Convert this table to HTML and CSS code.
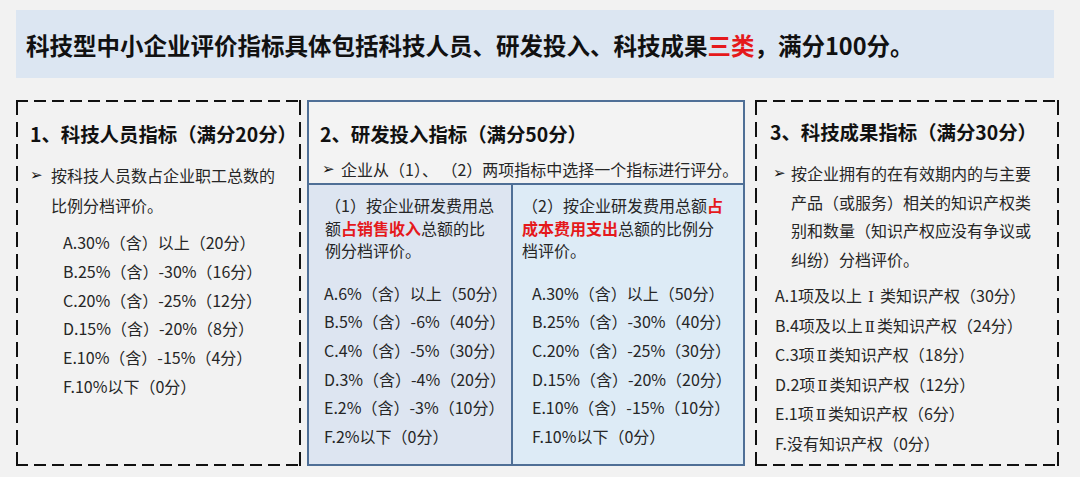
FILE: index.html
```html
<!DOCTYPE html>
<html lang="zh-CN">
<head>
<meta charset="utf-8">
<title>科技型中小企业评价指标</title>
<link rel="stylesheet" href="styles.css">
</head>
<body>
<div class="page">
  <div class="banner">科技型中小企业评价指标具体包括科技人员、研发投入、科技成果<span class="red">三类</span>，满分100分。</div>
  <div class="row">
    <section class="box dash box1">
      <h2 class="title">1、科技人员指标（满分20分）</h2>
      <div class="bullet"><span class="mark">➢</span><p>按科技人员数占企业职工总数的<br>比例分档评价。</p></div>
      <ul class="list list1">
        <li>A.30%（含）以上（20分）</li>
        <li>B.25%（含）-30%（16分）</li>
        <li>C.20%（含）-25%（12分）</li>
        <li>D.15%（含）-20%（8分）</li>
        <li>E.10%（含）-15%（4分）</li>
        <li>F.10%以下（0分）</li>
      </ul>
    </section>
    <section class="box box2">
      <div class="head">
        <h2 class="title">2、研发投入指标（满分50分）</h2>
        <div class="bullet sub"><span class="mark">➢</span><p>企业从（1）、 （2）两项指标中选择一个指标进行评分。</p></div>
      </div>
      <div class="cols">
        <div class="col left">
          <p class="desc">（1）按企业研发费用总<br>额<b class="red">占销售收入</b>总额的比<br>例分档评价。</p>
          <ul class="list list2">
            <li>A.6%（含）以上（50分）</li>
            <li>B.5%（含）-6%（40分）</li>
            <li>C.4%（含）-5%（30分）</li>
            <li>D.3%（含）-4%（20分）</li>
            <li>E.2%（含）-3%（10分）</li>
            <li>F.2%以下（0分）</li>
          </ul>
        </div>
        <div class="col right">
          <p class="desc">（2）按企业研发费用总额<b class="red">占</b><br><b class="red">成本费用支出</b>总额的比例分<br>档评价。</p>
          <ul class="list list2 listr">
            <li>A.30%（含）以上（50分）</li>
            <li>B.25%（含）-30%（40分）</li>
            <li>C.20%（含）-25%（30分）</li>
            <li>D.15%（含）-20%（20分）</li>
            <li>E.10%（含）-15%（10分）</li>
            <li>F.10%以下（0分）</li>
          </ul>
        </div>
      </div>
    </section>
    <section class="box dash box3">
      <h2 class="title">3、科技成果指标（满分30分）</h2>
      <div class="bullet b3"><span class="mark">➢</span><p>按企业拥有的在有效期内的与主要<br>产品（或服务）相关的知识产权类<br>别和数量（知识产权应没有争议或<br>纠纷）分档评价。</p></div>
      <ul class="list list3">
        <li>A.1项及以上<span class="rn rn1">Ⅰ</span>类知识产权（30分）</li>
        <li>B.4项及以上<span class="rn">Ⅱ</span>类知识产权（24分）</li>
        <li>C.3项<span class="rn">Ⅱ</span>类知识产权（18分）</li>
        <li>D.2项<span class="rn">Ⅱ</span>类知识产权（12分）</li>
        <li>E.1项<span class="rn">Ⅱ</span>类知识产权（6分）</li>
        <li>F.没有知识产权（0分）</li>
      </ul>
    </section>
  </div>
</div>
</body>
</html>
```
FILE: styles.css
```css
* { box-sizing: border-box; }
html, body { margin: 0; padding: 0; }
body {
  width: 1080px;
  height: 477px;
  overflow: hidden;
  background: #f2f2f2;
  font-family: "Noto Sans CJK SC", "Noto Sans", sans-serif;
  color: #262626;
}
p, ul, h2 { margin: 0; padding: 0; }
ul { list-style: none; }
.red { color: #e5191c; font-weight: 700; }

.page { padding: 10px 0 0 16px; }

.banner {
  width: 1038px;
  height: 68px;
  background: #dce6f2;
  padding: 2px 0 0 10px;
  font-size: 23.5px;
  font-weight: 700;
  line-height: 66px;
  color: #111;
  white-space: nowrap;
}

.row {
  display: flex;
  margin-top: 22px;
  height: 366px;
}

.box { height: 366px; }

.dash {
  background:
    repeating-linear-gradient(90deg, #111 0 12px, transparent 12px 18px) left top / 100% 2px no-repeat,
    repeating-linear-gradient(90deg, #111 0 12px, transparent 12px 18px) left bottom / 100% 2px no-repeat,
    repeating-linear-gradient(180deg, #111 0 15px, transparent 15px 22px) left top / 2px 100% no-repeat,
    repeating-linear-gradient(180deg, #111 0 15px, transparent 15px 22px) right top / 2px 100% no-repeat;
  padding: 2px;
}

.title {
  font-size: 19.4px;
  font-weight: 700;
  line-height: 30px;
  color: #111;
  white-space: nowrap;
}

.bullet { display: flex; font-size: 16px; line-height: 30px; }
.bullet p { white-space: nowrap; }
.mark {
  font-family: "DejaVu Sans", sans-serif;
  font-size: 15px;
  color: #111;
  width: 21px;
  flex: none;
}

.list { font-size: 16px; white-space: nowrap; }
.rn {
  font-family: "DejaVu Serif", "Liberation Serif", serif;
  font-size: 15px;
  line-height: 1;
  margin: 0 2px;
}
.rn1 { margin: 0 6px; }

/* box 1 */
.box1 { width: 285px; padding: 19px 12px 2px 14px; }
.box1 .bullet { margin-top: 11px; }
.list1 { margin-top: 8px; padding-left: 33px; line-height: 28.8px; }

/* box 2 */
.box2 {
  width: 438px;
  margin-left: 6px;
  border: 2px solid #4f6f96;
  display: flex;
  flex-direction: column;
}
.head {
  height: 83px;
  background: #f3f3f3;
  border-bottom: 2px solid #4f6f96;
  padding: 17px 0 0 11px;
}
.sub { margin-top: 8px; line-height: 24px; }
.sub .mark { width: 21px; padding-left: 2px; }
.cols { flex: 1; display: flex; }
.col { height: 100%; }
.left { width: 204px; background: #dde5f1; border-right: 2px solid #4f6f96; padding: 9px 0 0 16px; }
.right { flex: 1; background: #ddebf6; padding: 9px 0 0 9px; }
.desc { font-size: 16px; line-height: 22.5px; white-space: nowrap; }
.list2 { margin-top: 17px; line-height: 28.7px; }
.left .list2 { margin-left: -1px; }
.listr { padding-left: 10px; }

/* box 3 */
.box3 { width: 304px; margin-left: 10px; padding: 17px 2px 2px 15px; }
.b3 { margin-top: 12px; line-height: 28.5px; }
.b3 .mark { width: 21px; padding-left: 3px; }
.list3 { margin-top: 8px; padding-left: 5px; line-height: 29.6px; }
```
